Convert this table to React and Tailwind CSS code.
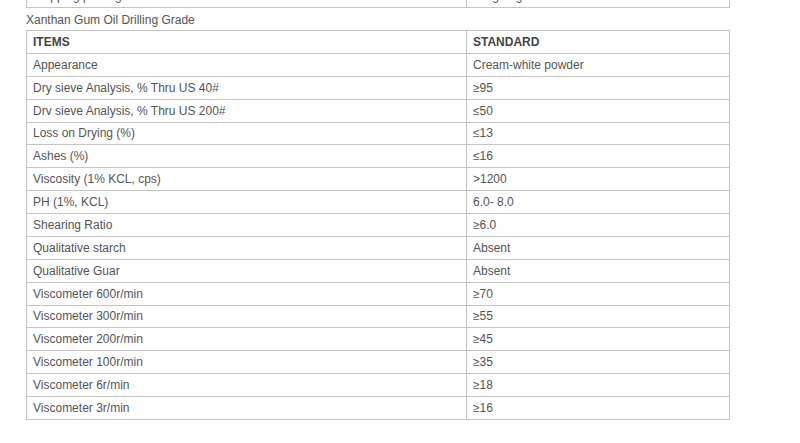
const rows = [
  ['Appearance', 'Cream-white powder'],
  ['Dry sieve Analysis, % Thru US 40#', '≥95'],
  ['Drv sieve Analysis, % Thru US 200#', '≤50'],
  ['Loss on Drying (%)', '≤13'],
  ['Ashes (%)', '≤16'],
  ['Viscosity (1% KCL, cps)', '>1200'],
  ['PH (1%, KCL)', '6.0- 8.0'],
  ['Shearing Ratio', '≥6.0'],
  ['Qualitative starch', 'Absent'],
  ['Qualitative Guar', 'Absent'],
  ['Viscometer 600r/min', '≥70'],
  ['Viscometer 300r/min', '≥55'],
  ['Viscometer 200r/min', '≥45'],
  ['Viscometer 100r/min', '≥35'],
  ['Viscometer 6r/min', '≥18'],
  ['Viscometer 3r/min', '≥16'],
];

const cell = 'border border-[#c4c4c4] px-[6px] h-[22.88px] p-0 align-middle';

export default function App() {
  return (
    <div className="w-[800px] h-[443px] bg-white overflow-hidden font-['Liberation_Sans',Arial,sans-serif] text-[12px] text-[#555]">
      <div className="ml-[26px] w-[704px]">
        {/* tail of the previous table */}
        <div className="h-[8px] overflow-hidden">
          <table className="w-full border-collapse -mt-[16px]">
            <tbody>
              <tr>
                <td className={`${cell} w-[440px]`}>Shipping package</td>
                <td className={cell}>25kg bag</td>
              </tr>
            </tbody>
          </table>
        </div>

        <div className="h-[22px] leading-[22px] pt-[1px]">Xanthan Gum Oil Drilling Grade</div>

        <table className="w-full border-collapse">
          <thead>
            <tr>
              <th className={`${cell} w-[440px] text-left font-bold text-[#444]`}>ITEMS</th>
              <th className={`${cell} text-left font-bold text-[#444]`}>STANDARD</th>
            </tr>
          </thead>
          <tbody>
            {rows.map(([item, std]) => (
              <tr key={item}>
                <td className={cell}>{item}</td>
                <td className={cell}>{std}</td>
              </tr>
            ))}
          </tbody>
        </table>
      </div>
    </div>
  );
}
